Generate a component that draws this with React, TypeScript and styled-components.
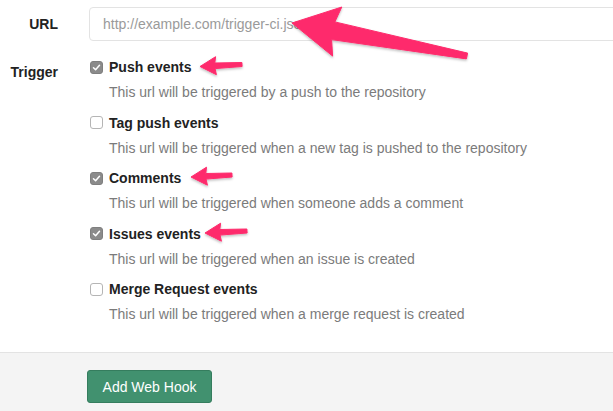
import React from "react";
import styled, { createGlobalStyle } from "styled-components";

const Global = createGlobalStyle`
  html, body { margin: 0; padding: 0; background: #fff; }
  body { font-family: "Liberation Sans", Arial, sans-serif; font-size: 14px; color: #222; }
`;

const Page = styled.div`
  position: relative;
  width: 613px;
  height: 411px;
  overflow: hidden;
  background: #fff;
`;

const FormBody = styled.div`
  padding-top: 7px;
  height: 352px;
  box-sizing: border-box;
`;

const Row = styled.div<{ $top?: number }>`
  display: grid;
  grid-template-columns: 58px 1fr;
  column-gap: 31px;
  align-items: ${(p) => (p.$top ? "start" : "center")};
  margin-top: ${(p) => p.$top ?? 0}px;
`;

const Label = styled.div<{ $padTop?: number }>`
  text-align: right;
  font-weight: bold;
  font-size: 14px;
  line-height: 20px;
  color: #222;
  padding-top: ${(p) => p.$padTop ?? 0}px;
`;

const Input = styled.input`
  box-sizing: border-box;
  width: 540px;
  height: 34px;
  border: 1px solid #e3e3e3;
  border-radius: 4px;
  padding: 0 13px;
  font-family: "Liberation Sans", Arial, sans-serif;
  font-size: 14px;
  color: #555;
  outline: none;
  &::placeholder { color: #9a9a9a; }
`;

const List = styled.div`
  display: flex;
  flex-direction: column;
  gap: 10.5px;
`;

const Item = styled.div`
  display: flex;
  flex-direction: column;
  gap: 5px;
`;

const Title = styled.label`
  display: flex;
  align-items: center;
  gap: 6px;
  font-weight: bold;
  line-height: 20px;
  color: #222;
  margin-left: 1px;
`;

const Box = styled.span<{ $checked: boolean }>`
  box-sizing: border-box;
  width: 13px;
  height: 13px;
  border-radius: 3px;
  display: inline-flex;
  align-items: center;
  justify-content: center;
  background: ${(p) => (p.$checked ? "#8b8b8b" : "#fff")};
  border: 1px solid ${(p) => (p.$checked ? "#7f7f7f" : "#b5b5b5")};
`;

const Desc = styled.div`
  line-height: 20px;
  color: #7b7b7b;
  padding-left: 20px;
`;

const Footer = styled.div`
  border-top: 1px solid #e3e3e3;
  background: #f4f4f4;
  height: 59px;
  padding: 17px 0 0 87px;
  box-sizing: border-box;
`;

const Button = styled.button`
  box-sizing: border-box;
  height: 33px;
  width: 125px;
  background: #41916f;
  border: 1px solid #357d5e;
  border-radius: 3px;
  color: #fff;
  font-family: "Liberation Sans", Arial, sans-serif;
  font-size: 14px;
  padding: 0;
`;

const Overlay = styled.svg`
  position: absolute;
  left: 0;
  top: 0;
  pointer-events: none;
`;

type P = [number, number];

function arrowPoints(tip: P, tail: P, headLen: number, headHalf: number, near: number, far: number, sweep: number) {
  const dx = tail[0] - tip[0];
  const dy = tail[1] - tip[1];
  const len = Math.hypot(dx, dy);
  const ux = dx / len, uy = dy / len;
  const nx = -uy, ny = ux;
  const at = (t: number, s: number): P => [tip[0] + ux * t + nx * s, tip[1] + uy * t + ny * s];
  const pts: P[] = [
    tip,
    at(headLen + sweep, headHalf),
    at(headLen, near),
    at(len, far),
    at(len, -far),
    at(headLen, -near),
    at(headLen + sweep, -headHalf),
  ];
  return pts.map((p) => `${p[0].toFixed(1)},${p[1].toFixed(1)}`).join(" ");
}

const Check = () => (
  <svg width="9" height="9" viewBox="0 0 9 9">
    <path d="M1.5 4.8 L3.6 6.8 L7.5 2.2" fill="none" stroke="#fff" strokeWidth="1.5" strokeLinecap="round" strokeLinejoin="round" />
  </svg>
);

const items = [
  { title: "Push events", desc: "This url will be triggered by a push to the repository", checked: true },
  { title: "Tag push events", desc: "This url will be triggered when a new tag is pushed to the repository", checked: false },
  { title: "Comments", desc: "This url will be triggered when someone adds a comment", checked: true },
  { title: "Issues events", desc: "This url will be triggered when an issue is created", checked: true },
  { title: "Merge Request events", desc: "This url will be triggered when a merge request is created", checked: false },
];

export default function App() {
  const arrows = [
    arrowPoints([292, 23], [467, 56], 42, 25, 9, 3, 4),
    arrowPoints([200, 66.5], [242, 64.5], 15, 9, 2.8, 2, 1),
    arrowPoints([191, 177], [232, 175], 15, 9, 2.8, 2, 1),
    arrowPoints([205, 233], [247, 231], 15, 9, 2.8, 2, 1),
  ];
  return (
    <Page>
      <Global />
      <FormBody>
        <Row>
          <Label>URL</Label>
          <Input placeholder="http://example.com/trigger-ci.json" />
        </Row>
        <Row $top={16}>
          <Label $padTop={5}>Trigger</Label>
          <List>
            {items.map((it) => (
              <Item key={it.title}>
                <Title>
                  <Box $checked={it.checked}>{it.checked && <Check />}</Box>
                  {it.title}
                </Title>
                <Desc>{it.desc}</Desc>
              </Item>
            ))}
          </List>
        </Row>
      </FormBody>
      <Footer>
        <Button>Add Web Hook</Button>
      </Footer>
      <Overlay width="613" height="411" viewBox="0 0 613 411">
        <defs>
          <filter id="sh" x="-10%" y="-30%" width="120%" height="160%">
            <feDropShadow dx="0" dy="1.5" stdDeviation="1.2" floodColor="#000" floodOpacity="0.25" />
          </filter>
        </defs>
        {arrows.map((p, i) => (
          <polygon key={i} points={p} fill="#fe2b6c" strokeLinejoin="round" stroke="#fe2b6c" strokeWidth="1" filter="url(#sh)" />
        ))}
      </Overlay>
    </Page>
  );
}
